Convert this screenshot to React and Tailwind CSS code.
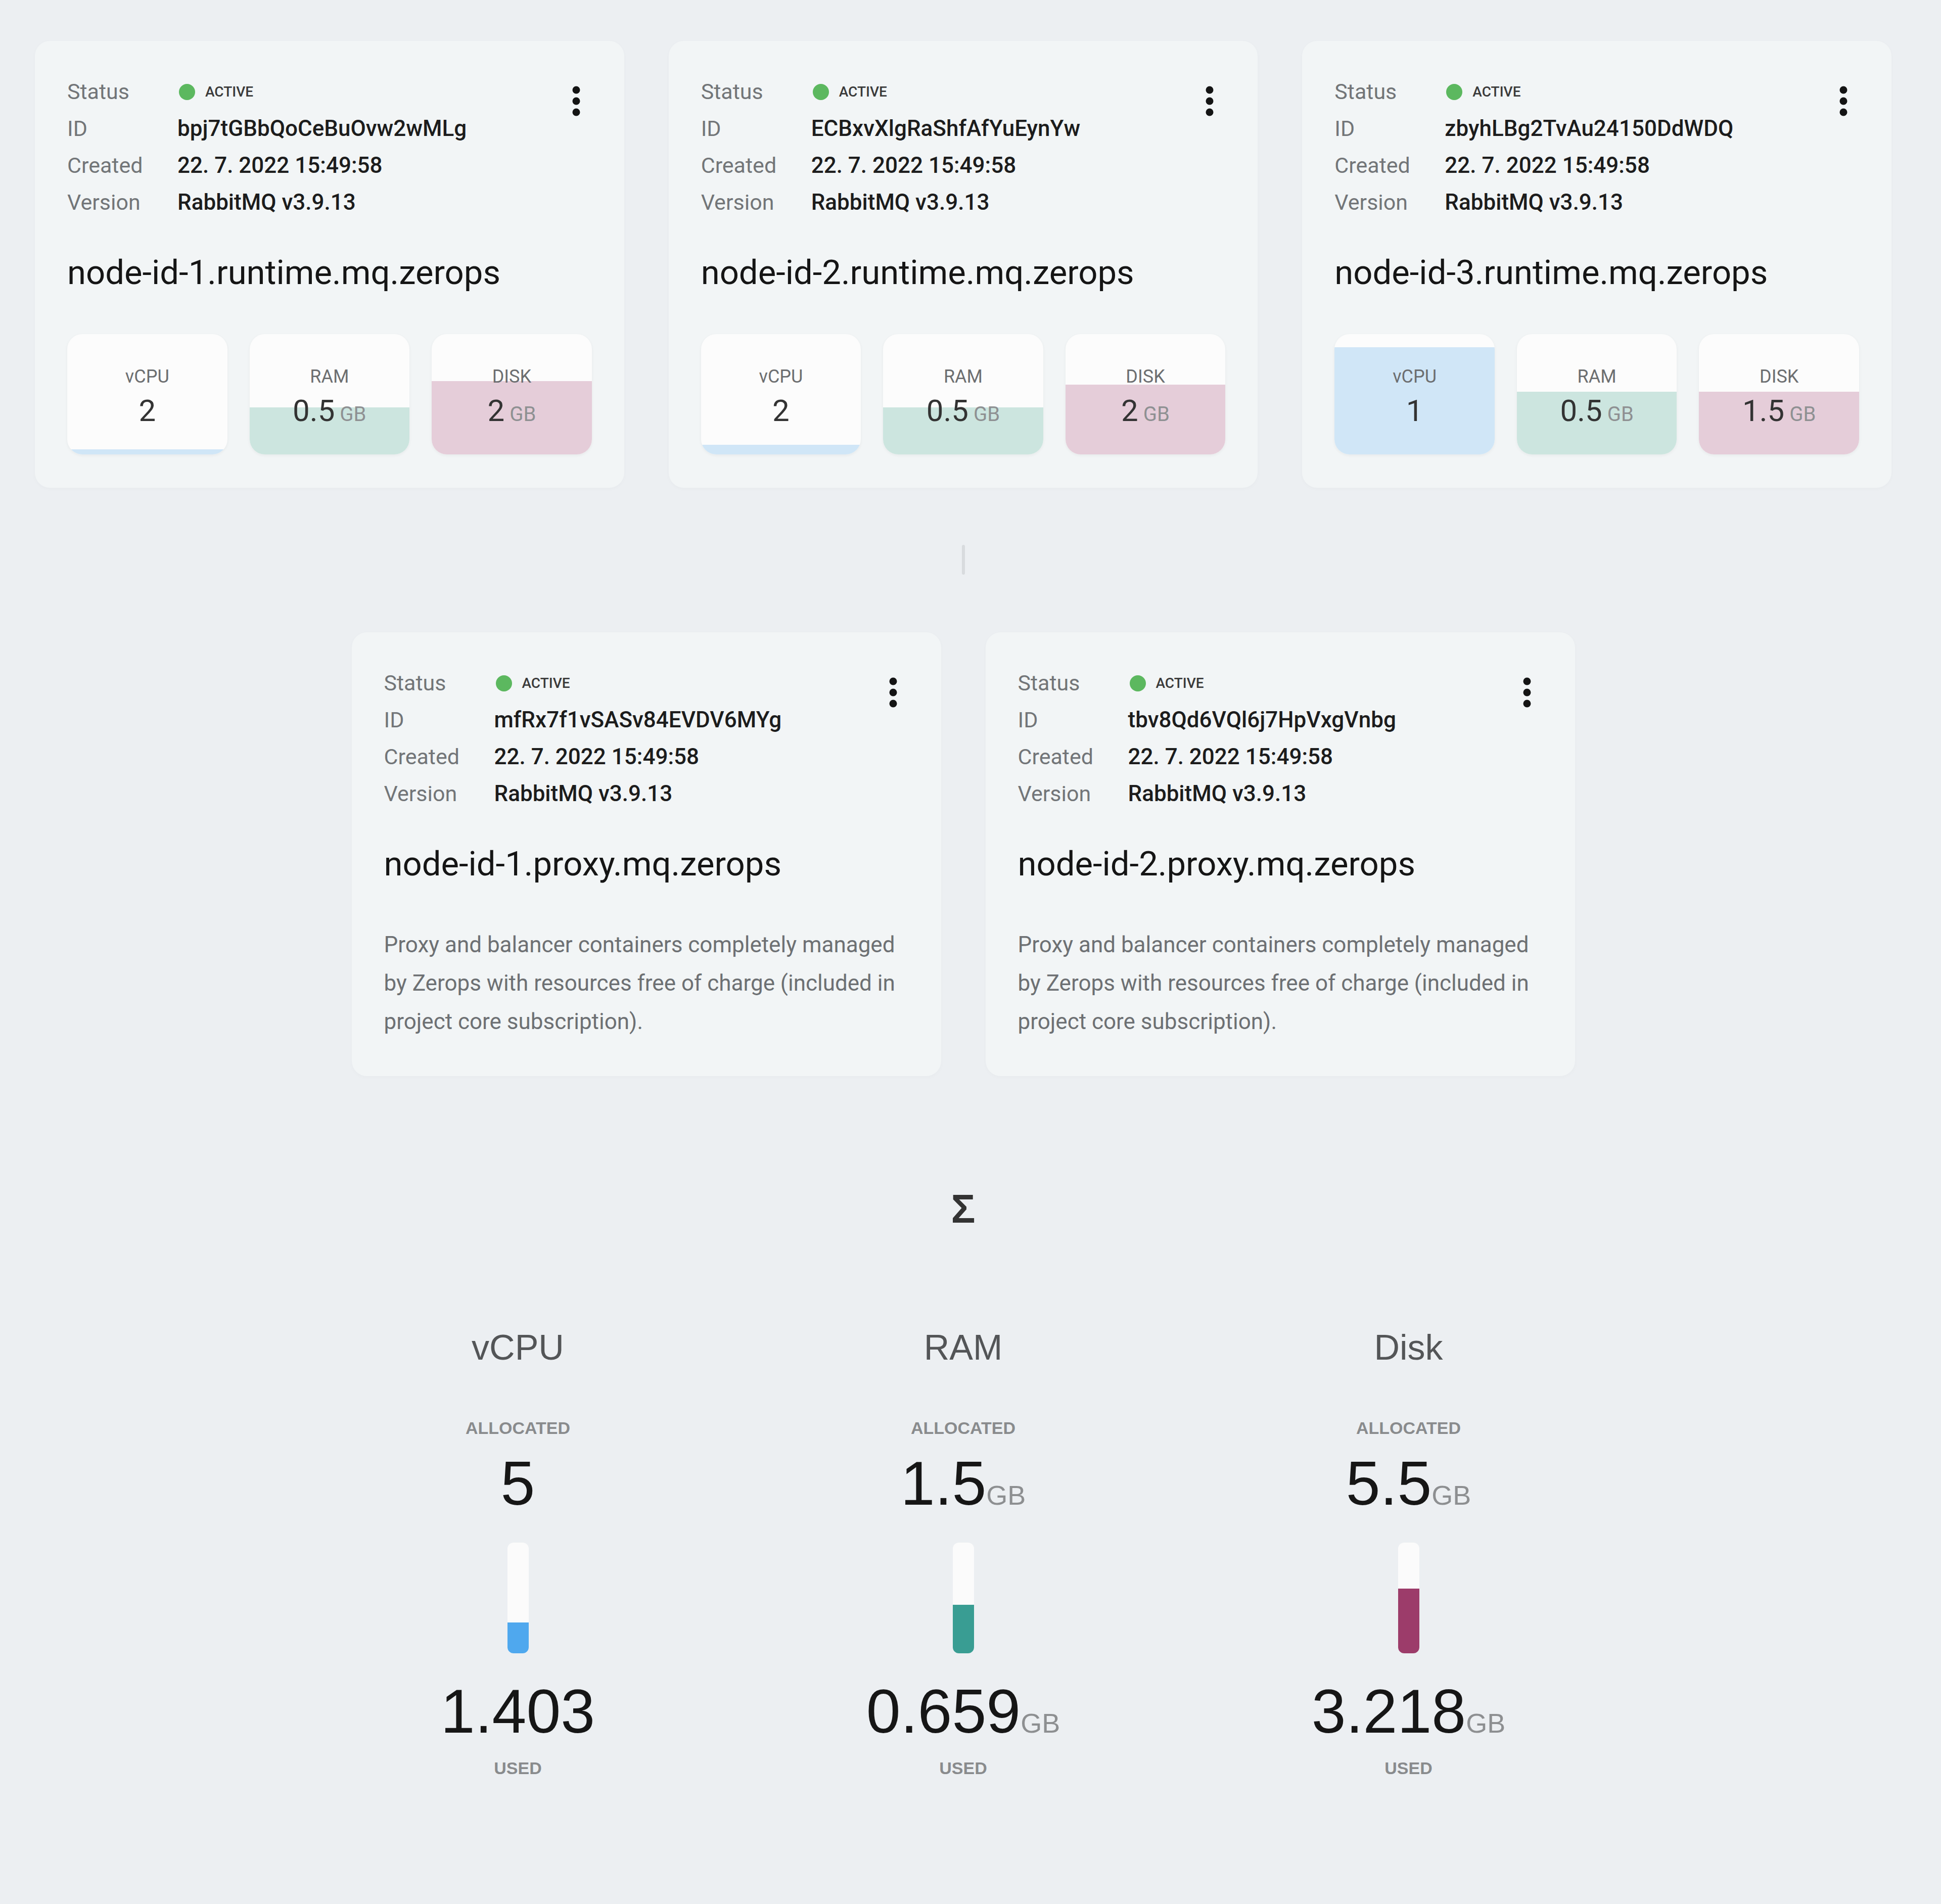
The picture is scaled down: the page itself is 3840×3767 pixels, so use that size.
import React from 'react';

const runtimeNodes = [
  {
    id: 'bpj7tGBbQoCeBuOvw2wMLg',
    host: 'node-id-1.runtime.mq.zerops',
    resources: [
      { label: 'vCPU', value: '2', fill: 4, kind: 'cpu' },
      { label: 'RAM', value: '0.5', unit: 'GB', fill: 39, kind: 'ram' },
      { label: 'DISK', value: '2', unit: 'GB', fill: 61, kind: 'disk' },
    ],
  },
  {
    id: 'ECBxvXlgRaShfAfYuEynYw',
    host: 'node-id-2.runtime.mq.zerops',
    resources: [
      { label: 'vCPU', value: '2', fill: 8, kind: 'cpu' },
      { label: 'RAM', value: '0.5', unit: 'GB', fill: 39, kind: 'ram' },
      { label: 'DISK', value: '2', unit: 'GB', fill: 58, kind: 'disk' },
    ],
  },
  {
    id: 'zbyhLBg2TvAu24150DdWDQ',
    host: 'node-id-3.runtime.mq.zerops',
    resources: [
      { label: 'vCPU', value: '1', fill: 89, kind: 'cpu' },
      { label: 'RAM', value: '0.5', unit: 'GB', fill: 52, kind: 'ram' },
      { label: 'DISK', value: '1.5', unit: 'GB', fill: 52, kind: 'disk' },
    ],
  },
];

const proxyNodes = [
  { id: 'mfRx7f1vSASv84EVDV6MYg', host: 'node-id-1.proxy.mq.zerops' },
  { id: 'tbv8Qd6VQl6j7HpVxgVnbg', host: 'node-id-2.proxy.mq.zerops' },
];

const totals = [
  { title: 'vCPU', allocated: '5', used: '1.403', pct: 28, bar: 'bg-[#4fa8ee]' },
  { title: 'RAM', allocated: '1.5', used: '0.659', unit: 'GB', pct: 44, bar: 'bg-[#399d93]' },
  { title: 'Disk', allocated: '5.5', used: '3.218', unit: 'GB', pct: 58.5, bar: 'bg-[#9c3c6a]' },
];

const fills = {
  cpu: 'bg-[#d0e6f7]',
  ram: 'bg-[#cce5df]',
  disk: 'bg-[#e5cdd9]',
};

const roboto = { fontFamily: 'Roboto, "Noto Sans", sans-serif' };
const arial = { fontFamily: '"Liberation Sans", Arial, sans-serif' };

const Kebab = () => (
  <button className="w-[62px] h-[62px] mt-[24px] flex items-center justify-center">
    <svg width="20" height="64" viewBox="0 0 20 64">
      <circle cx="10" cy="10" r="7.5" fill="#141414" />
      <circle cx="10" cy="32" r="7.5" fill="#141414" />
      <circle cx="10" cy="54" r="7.5" fill="#141414" />
    </svg>
  </button>
);

const InfoRows = ({ id }) => {
  const rows = [
    { label: 'ID', value: id },
    { label: 'Created', value: '22. 7. 2022 15:49:58' },
    { label: 'Version', value: 'RabbitMQ v3.9.13' },
  ];
  return (
    <div className="flex flex-col text-[43px] leading-[73px]">
      <div className="flex">
        <span className="w-[218px] text-[#727578]">Status</span>
        <span className="flex items-center">
          <span className="w-[32px] h-[32px] rounded-full bg-[#5cb85f] ml-[3px]" />
          <span className="ml-[20px] text-[28px] font-medium text-[#3a3a3a]">ACTIVE</span>
        </span>
      </div>
      {rows.map((r) => (
        <div key={r.label} className="flex">
          <span className="w-[218px] text-[#727578]">{r.label}</span>
          <span className="text-[44px] text-[#1c1c1c] font-medium">{r.value}</span>
        </div>
      ))}
    </div>
  );
};

const ResourceBox = ({ res }) => (
  <div className="relative h-[238px] rounded-[30px] overflow-hidden bg-[#fcfcfc] shadow-[0_2px_6px_rgba(0,0,0,0.05)]">
    <div
      className={`absolute left-0 right-0 bottom-0 ${fills[res.kind]}`}
      style={{ height: `${res.fill}%` }}
    />
    <div className="relative flex flex-col items-center pt-[64px]">
      <span className="text-[36px] leading-[40px] text-[#6c6e70]">{res.label}</span>
      <span className="mt-[13px] h-[70px] flex items-baseline">
        <span className="text-[60px] leading-[70px] text-[#333]">{res.value}</span>
        {res.unit && <span className="ml-[10px] text-[40px] leading-none text-[#8e9092]">{res.unit}</span>}
      </span>
    </div>
  </div>
);

const NodeCard = ({ node, children }) => (
  <div className="rounded-[30px] bg-[#f2f5f6] shadow-[0_2px_8px_rgba(0,0,0,0.025)] px-[64px] pt-[64px]" style={roboto}>
    <div className="flex justify-between">
      <InfoRows id={node.id} />
      <Kebab />
    </div>
    <h3 className="mt-[58px] text-[67px] leading-[88px] text-[#151515]">{node.host}</h3>
    {children}
  </div>
);

const Amount = ({ value, unit }) => (
  <span className="h-[120px] flex items-baseline">
    <span className="text-[122px] leading-[120px] text-[#161616]">{value}</span>
    {unit && <span className="text-[54px] leading-none text-[#8d8f91]">{unit}</span>}
  </span>
);

const Totals = ({ t }) => (
  <div className="flex flex-col items-center" style={arial}>
    <span className="text-[70px] leading-[80px] text-[#535557]">{t.title}</span>
    <span className="mt-[99px] text-[34px] leading-[40px] font-bold text-[#898b8d]">ALLOCATED</span>
    <div className="mt-[30px]">
      <Amount value={t.allocated} unit={t.unit} />
    </div>
    <div className="mt-[57px] w-[42px] h-[219px] rounded-[12px] overflow-hidden bg-[#fbfbfb] flex flex-col justify-end">
      <div className={t.bar} style={{ height: `${t.pct}%` }} />
    </div>
    <div className="mt-[55px]">
      <Amount value={t.used} unit={t.unit} />
    </div>
    <span className="mt-[32px] text-[34px] leading-[40px] font-bold text-[#898b8d]">USED</span>
  </div>
);

export default function App() {
  return (
    <div className="min-h-[3767px] bg-[#eceff2] pl-[69px] pr-[98px] pt-[81px] flex flex-col items-center">
      <div className="w-full grid grid-cols-3 gap-[88px]">
        {runtimeNodes.map((node) => (
          <NodeCard key={node.id} node={node}>
            <div className="mt-[78px] pb-[66px] grid grid-cols-3 gap-[44px]">
              {node.resources.map((res) => (
                <ResourceBox key={res.label} res={res} />
              ))}
            </div>
          </NodeCard>
        ))}
      </div>

      <div className="mt-[113px] w-[6px] h-[59px] rounded-full bg-[#d8dbde]" />

      <div className="mt-[114px] grid grid-cols-2 gap-[88px] w-[2420px]">
        {proxyNodes.map((node) => (
          <NodeCard key={node.id} node={node}>
            <p className="mt-[78px] pb-[70px] text-[44px] leading-[76px] text-[#6d7073]">
              Proxy and balancer containers completely managed by Zerops with resources free of charge (included in project core subscription).
            </p>
          </NodeCard>
        ))}
      </div>

      <div className="mt-[223px] text-[80px] leading-[80px] font-bold text-[#333]" style={arial}>Σ</div>

      <div className="mt-[194px] w-[2643px] grid grid-cols-3">
        {totals.map((t) => (
          <Totals key={t.title} t={t} />
        ))}
      </div>
    </div>
  );
}
